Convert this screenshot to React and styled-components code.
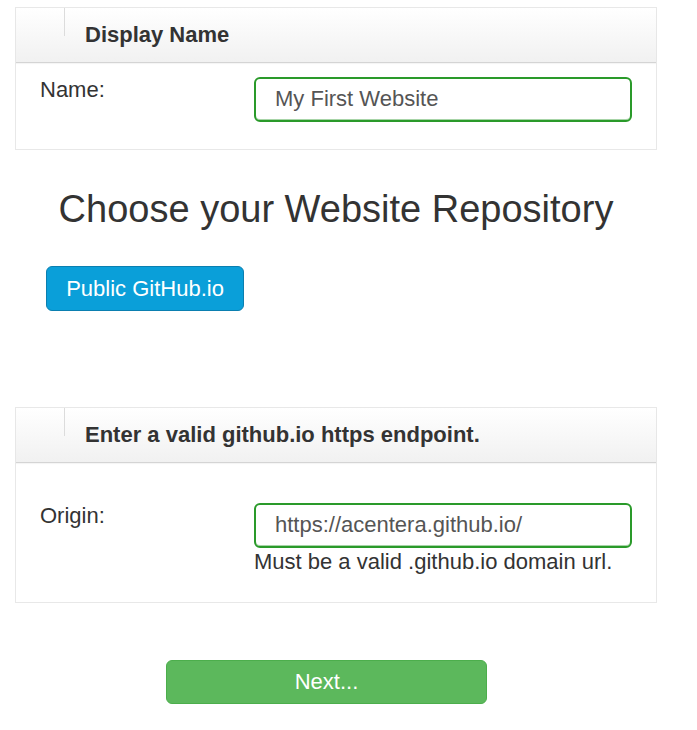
import React from "react";
import styled, { createGlobalStyle } from "styled-components";

const Global = createGlobalStyle`
  html, body { margin: 0; padding: 0; background: #fff; }
  body {
    font-family: "Liberation Sans", Arial, Helvetica, sans-serif;
    font-size: 22px;
    line-height: 31.4px;
    color: #333;
  }
  * { box-sizing: border-box; }
`;

const Page = styled.div`
  width: 697px;
  padding: 7px 40px 26px 15px;
  display: flex;
  flex-direction: column;
`;

const Panel = styled.section`
  border: 1px solid #e8e8e8;
  background: #fff;
  display: flex;
  flex-direction: column;
`;

const PanelHeader = styled.header`
  height: 55px;
  display: flex;
  align-items: center;
  background: linear-gradient(to bottom, #ffffff 0%, #f1f1f1 100%);
  border-bottom: 1px solid #d4d4d4;
  box-shadow: 0 1px 1px rgba(0, 0, 0, 0.04);
`;

const HeaderDivider = styled.span`
  align-self: flex-start;
  width: 1px;
  height: 28px;
  margin-left: 48px;
  background: #dcdcdc;
`;

const PanelTitle = styled.h3`
  margin: 0 0 0 20px;
  font-size: 22px;
  font-weight: bold;
  line-height: 31.4px;
  color: #333;
`;

const PanelBody = styled.div`
  display: grid;
  grid-template-columns: 214px 378px;
  padding: ${(p) => p.$top}px 25px ${(p) => p.$bottom}px 24px;
`;

const Label = styled.label`
  font-size: 22px;
  line-height: 31.4px;
  margin-top: -3px;
`;

const Field = styled.div`
  display: flex;
  flex-direction: column;
`;

const Input = styled.input`
  width: 378px;
  height: 45px;
  padding: 0 20px 2px 19px;
  font-family: "Liberation Sans", Arial, Helvetica, sans-serif;
  font-size: 22px;
  color: #555;
  border: 2px solid #2a9a2a;
  border-radius: 6px;
  background: #fff;
  box-shadow: inset 0 -1px 0 rgba(80, 170, 80, 0.5);
  outline: none;
`;

const Help = styled.span`
  font-size: 22px;
  line-height: 28px;
  color: #333;
`;

const Heading = styled.h2`
  margin: 38px 0 36px;
  text-align: center;
  font-size: 38px;
  font-weight: normal;
  line-height: 42px;
  color: #333;
`;

const ButtonRow = styled.div`
  display: flex;
  padding-left: ${(p) => p.$indent}px;
  margin: ${(p) => p.$margin};
`;

const Button = styled.button`
  height: ${(p) => p.$height}px;
  width: ${(p) => p.$width}px;
  font-family: "Liberation Sans", Arial, Helvetica, sans-serif;
  font-size: 22px;
  color: #fff;
  background: ${(p) => p.$bg};
  border: 1px solid ${(p) => p.$border};
  border-radius: 6px;
  padding: 0;
  cursor: pointer;
`;

export default function App() {
  return (
    <>
      <Global />
      <Page>
        <Panel>
          <PanelHeader>
            <HeaderDivider />
            <PanelTitle>Display Name</PanelTitle>
          </PanelHeader>
          <PanelBody $top={14} $bottom={27}>
            <Label>Name:</Label>
            <Field>
              <Input defaultValue="My First Website" />
            </Field>
          </PanelBody>
        </Panel>

        <Heading>Choose your Website Repository</Heading>

        <ButtonRow $indent={31} $margin="0 0 96px">
          <Button $width={198} $height={45} $bg="#0a9fd9" $border="#0b7fb0">
            Public GitHub.io
          </Button>
        </ButtonRow>

        <Panel>
          <PanelHeader>
            <HeaderDivider />
            <PanelTitle>Enter a valid github.io https endpoint.</PanelTitle>
          </PanelHeader>
          <PanelBody $top={40} $bottom={26}>
            <Label>Origin:</Label>
            <Field>
              <Input defaultValue="https://acentera.github.io/" />
              <Help>Must be a valid .github.io domain url.</Help>
            </Field>
          </PanelBody>
        </Panel>

        <ButtonRow $indent={151} $margin="57px 0 0">
          <Button $width={321} $height={44} $bg="#5cb85c" $border="#4cae4c">
            Next...
          </Button>
        </ButtonRow>
      </Page>
    </>
  );
}
